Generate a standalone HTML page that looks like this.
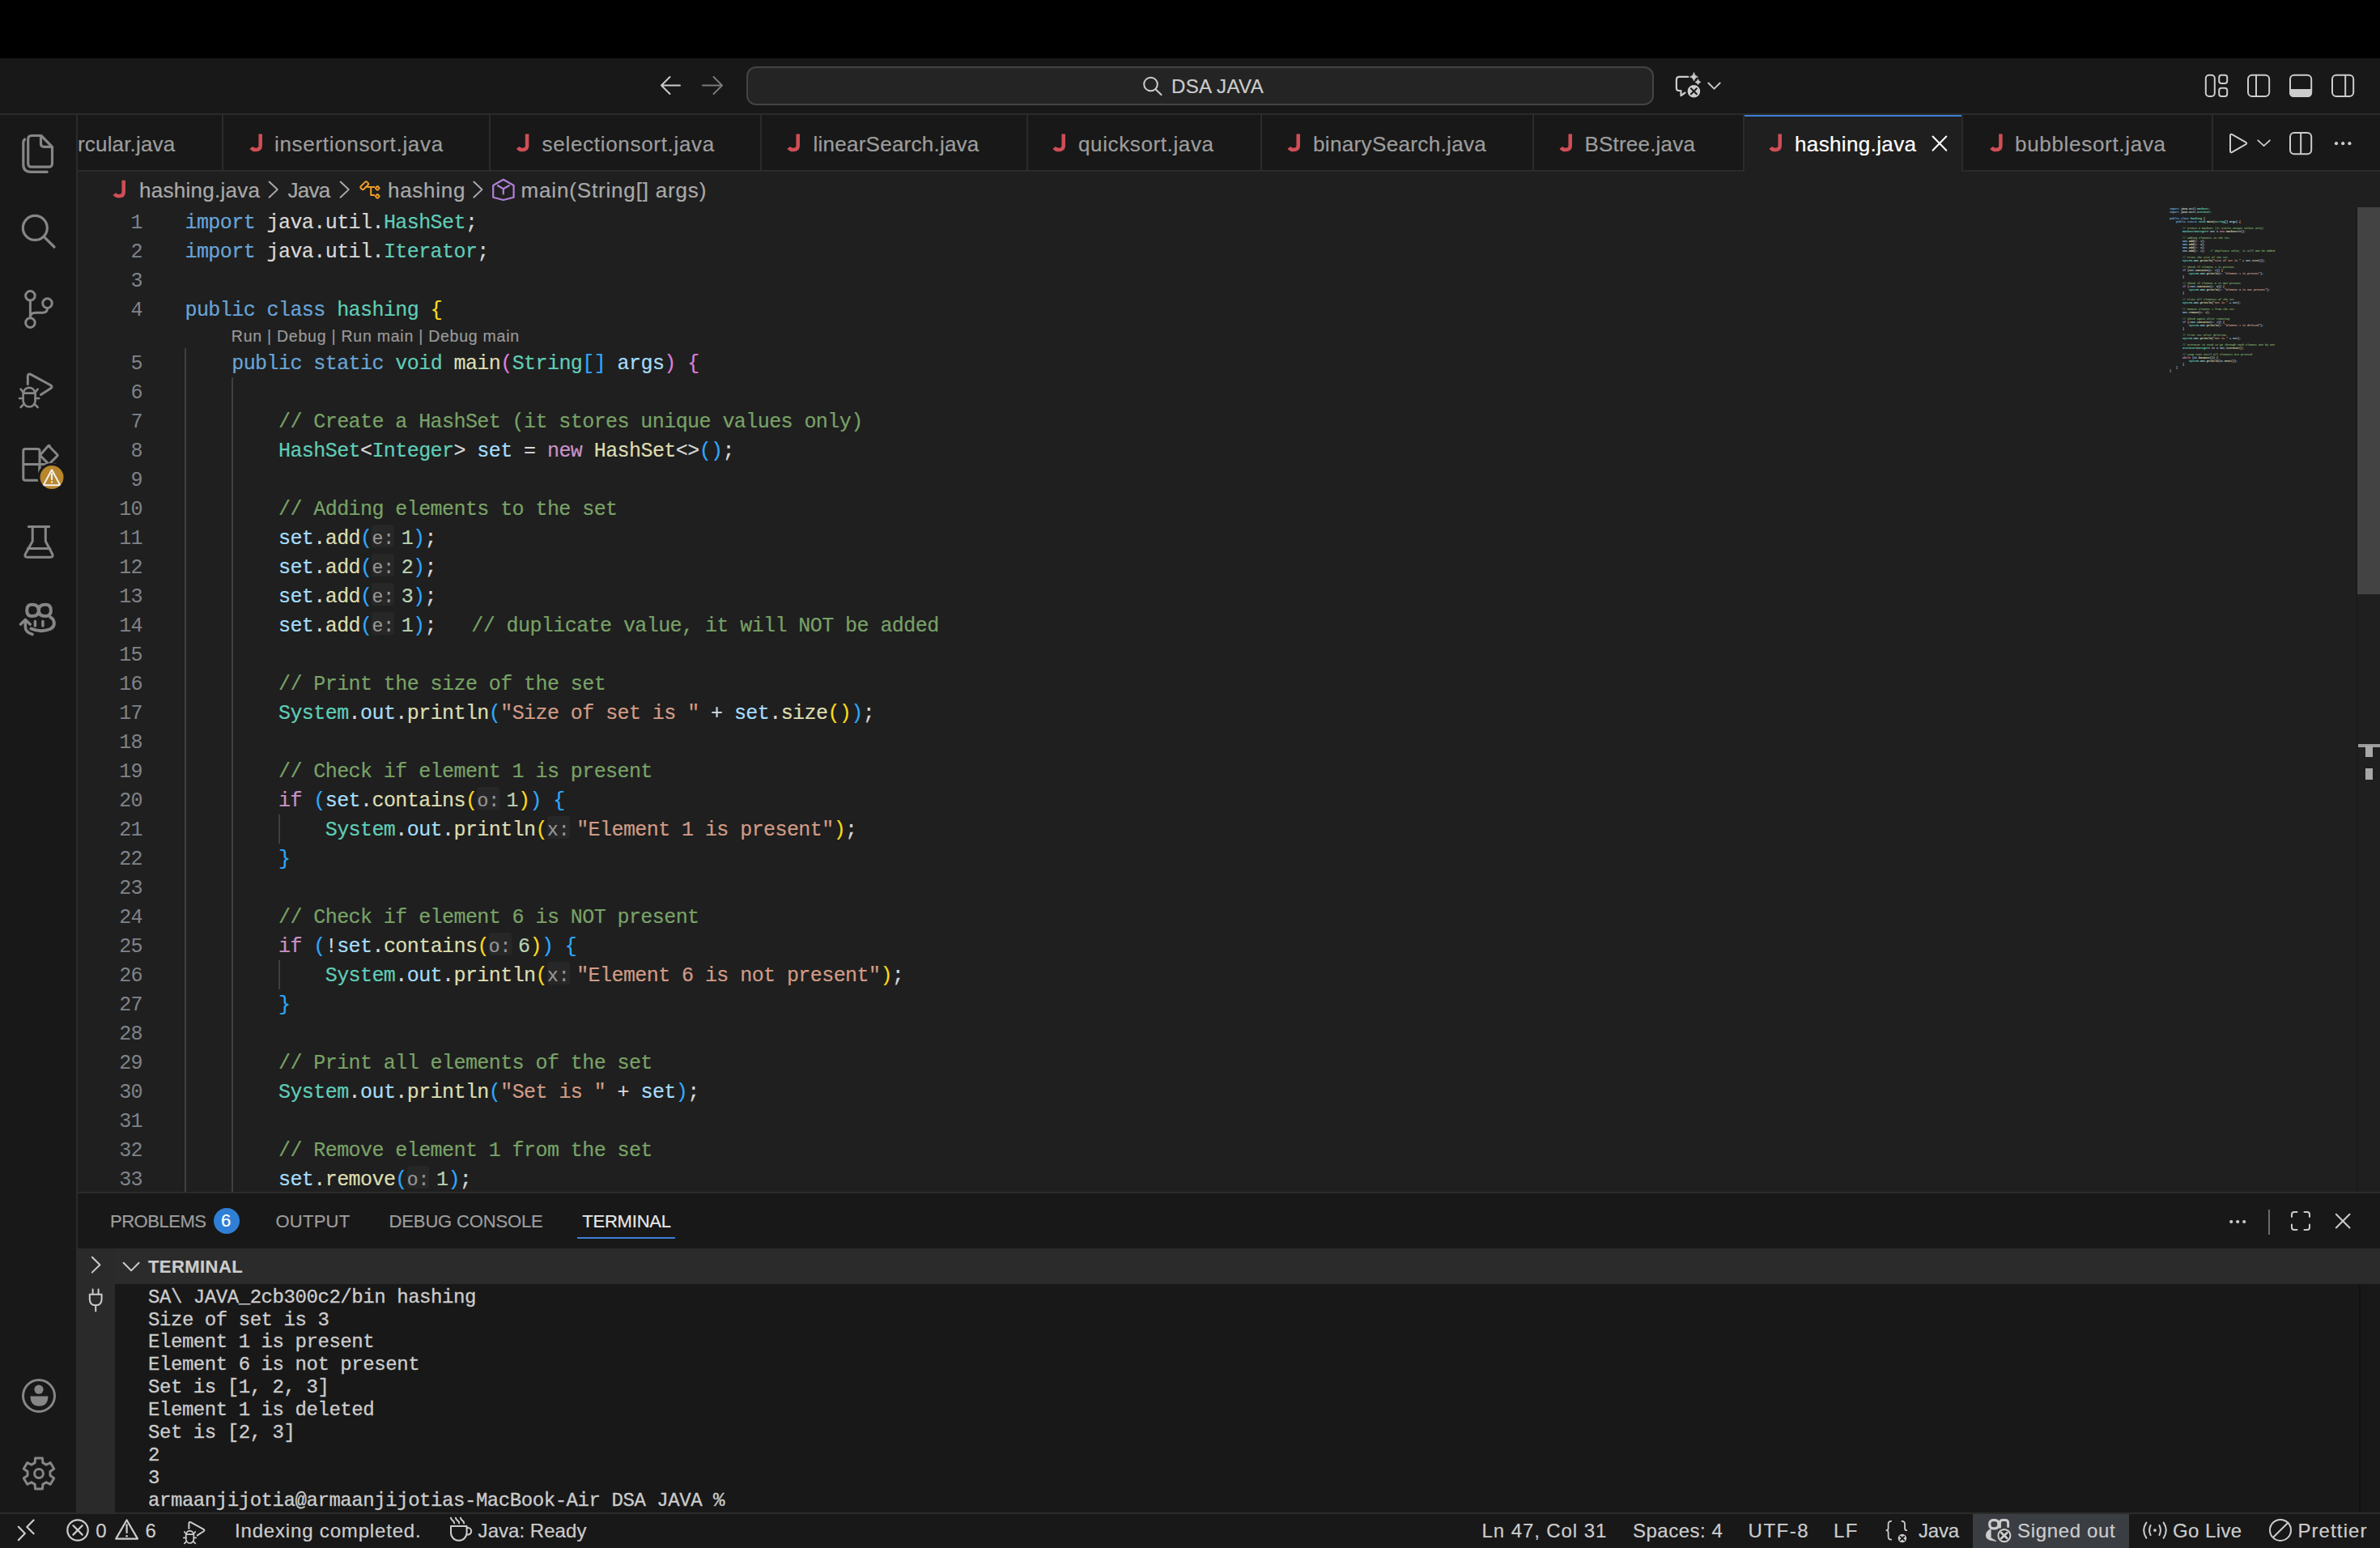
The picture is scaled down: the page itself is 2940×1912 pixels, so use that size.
<!DOCTYPE html>
<html><head><meta charset="utf-8"><title>hashing.java - DSA JAVA</title>
<style>
html,body{margin:0;padding:0;background:#000;overflow:hidden}
#root{position:relative;width:2940px;height:1912px;overflow:hidden;background:#181818;font-family:'Liberation Sans',sans-serif}
.ln{position:absolute;left:96px;width:80px;text-align:right;font-family:'Liberation Mono',monospace;color:#7f8389;white-space:pre}
.cl{position:absolute;font-family:'Liberation Mono',monospace;color:#d8d8d8;white-space:pre;-webkit-text-stroke:0.2px}
.kw{color:#68a5d8}.ty{color:#60cdb7}.fn{color:#ddddb1}.va{color:#a5ddfb}.cm{color:#79a267}.st{color:#d19b85}.nu{color:#bbd1b0}.ct{color:#c992c5}.b1{color:#fcd91c}.b2{color:#dc7ed8}.b3{color:#30a8fc}
.hi{display:inline-block;vertical-align:top;height:28.7px;width:27.7px;margin-right:8.5px;font-size:23px;letter-spacing:0;color:#969696;background:#272727;border-radius:3px}
.mm{position:absolute;left:2680px;font-family:'Liberation Mono',monospace;font-size:3.33px;line-height:4px;white-space:pre;color:#bbb}
</style></head><body><div id="root">
<div style="position:absolute;left:0px;top:0px;width:2940px;height:72px;background:#000;"></div><div style="position:absolute;left:0px;top:72px;width:2940px;height:68px;background:#181818;"></div><div style="position:absolute;left:0px;top:140px;width:2940px;height:2px;background:#2b2b2b;"></div><div style="position:absolute;left:922px;top:82px;width:1121px;height:48px;background:#242424;box-sizing:border-box;border:2px solid #444444;border-radius:12px"></div><div style="position:absolute;left:0px;top:142px;width:94px;height:1726px;background:#181818;"></div><div style="position:absolute;left:94px;top:142px;width:2px;height:1726px;background:#2b2b2b;"></div><div style="position:absolute;left:96px;top:142px;width:2844px;height:70px;background:#181818;"></div><div style="position:absolute;left:96px;top:210px;width:2844px;height:2px;background:#2b2b2b;"></div><div style="position:absolute;left:274px;top:142px;width:2px;height:70px;background:#2b2b2b;"></div><div style="position:absolute;left:604px;top:142px;width:2px;height:70px;background:#2b2b2b;"></div><div style="position:absolute;left:939px;top:142px;width:2px;height:70px;background:#2b2b2b;"></div><div style="position:absolute;left:1268px;top:142px;width:2px;height:70px;background:#2b2b2b;"></div><div style="position:absolute;left:1557px;top:142px;width:2px;height:70px;background:#2b2b2b;"></div><div style="position:absolute;left:1893px;top:142px;width:2px;height:70px;background:#2b2b2b;"></div><div style="position:absolute;left:2732px;top:142px;width:2px;height:70px;background:#2b2b2b;"></div><div style="position:absolute;left:2153px;top:142px;width:272px;height:70px;background:#1f1f1f;"></div><div style="position:absolute;left:2153px;top:142px;width:2px;height:70px;background:#2b2b2b;"></div><div style="position:absolute;left:2423px;top:142px;width:2px;height:70px;background:#2b2b2b;"></div><div style="position:absolute;left:2155px;top:142px;width:268px;height:2px;background:#3b7fd6;"></div><div style="position:absolute;left:96px;top:212px;width:2844px;height:1260px;background:#1f1f1f;"></div><div style="position:absolute;left:2911px;top:256px;width:1px;height:1216px;background:#171717;"></div><div style="position:absolute;left:2912px;top:256px;width:28px;height:478px;background:#434343;"></div><div style="position:absolute;left:2913px;top:919px;width:27px;height:4px;background:#9a9a9a;"></div><div style="position:absolute;left:2922px;top:921px;width:9px;height:14px;background:#a8a8a8;"></div><div style="position:absolute;left:2922px;top:949px;width:9px;height:14px;background:#a8a8a8;"></div><div style="position:absolute;left:96px;top:1472px;width:2844px;height:2px;background:#2b2b2b;"></div><div style="position:absolute;left:96px;top:1474px;width:2844px;height:394px;background:#181818;"></div><div style="position:absolute;left:713px;top:1528px;width:121px;height:2px;background:#3b7fd6;"></div><div style="position:absolute;left:264px;top:1492px;width:32px;height:32px;background:#2f7fd6;border-radius:16px"></div><div style="position:absolute;left:96px;top:1542px;width:46px;height:326px;background:#2a2a2a;"></div><div style="position:absolute;left:142px;top:1542px;width:2798px;height:44px;background:#2b2b2b;"></div><div style="position:absolute;left:2914px;top:1588px;width:2px;height:280px;background:#101010;"></div><div style="position:absolute;left:183px;top:1588.60px;font-family:'Liberation Mono';font-size:24px;line-height:28px;letter-spacing:-0.44px;-webkit-text-stroke:0.3px #cccccc;color:#cccccc;white-space:pre">SA\ JAVA_2cb300c2/bin hashing</div><div style="position:absolute;left:183px;top:1616.52px;font-family:'Liberation Mono';font-size:24px;line-height:28px;letter-spacing:-0.44px;-webkit-text-stroke:0.3px #cccccc;color:#cccccc;white-space:pre">Size of set is 3</div><div style="position:absolute;left:183px;top:1644.44px;font-family:'Liberation Mono';font-size:24px;line-height:28px;letter-spacing:-0.44px;-webkit-text-stroke:0.3px #cccccc;color:#cccccc;white-space:pre">Element 1 is present</div><div style="position:absolute;left:183px;top:1672.36px;font-family:'Liberation Mono';font-size:24px;line-height:28px;letter-spacing:-0.44px;-webkit-text-stroke:0.3px #cccccc;color:#cccccc;white-space:pre">Element 6 is not present</div><div style="position:absolute;left:183px;top:1700.28px;font-family:'Liberation Mono';font-size:24px;line-height:28px;letter-spacing:-0.44px;-webkit-text-stroke:0.3px #cccccc;color:#cccccc;white-space:pre">Set is [1, 2, 3]</div><div style="position:absolute;left:183px;top:1728.20px;font-family:'Liberation Mono';font-size:24px;line-height:28px;letter-spacing:-0.44px;-webkit-text-stroke:0.3px #cccccc;color:#cccccc;white-space:pre">Element 1 is deleted</div><div style="position:absolute;left:183px;top:1756.12px;font-family:'Liberation Mono';font-size:24px;line-height:28px;letter-spacing:-0.44px;-webkit-text-stroke:0.3px #cccccc;color:#cccccc;white-space:pre">Set is [2, 3]</div><div style="position:absolute;left:183px;top:1784.04px;font-family:'Liberation Mono';font-size:24px;line-height:28px;letter-spacing:-0.44px;-webkit-text-stroke:0.3px #cccccc;color:#cccccc;white-space:pre">2</div><div style="position:absolute;left:183px;top:1811.96px;font-family:'Liberation Mono';font-size:24px;line-height:28px;letter-spacing:-0.44px;-webkit-text-stroke:0.3px #cccccc;color:#cccccc;white-space:pre">3</div><div style="position:absolute;left:183px;top:1839.88px;font-family:'Liberation Mono';font-size:24px;line-height:28px;letter-spacing:-0.44px;-webkit-text-stroke:0.3px #cccccc;color:#cccccc;white-space:pre">armaanjijotia@armaanjijotias-MacBook-Air DSA JAVA %</div><div style="position:absolute;left:0px;top:1868px;width:2940px;height:2px;background:#2b2b2b;"></div><div style="position:absolute;left:0px;top:1870px;width:2940px;height:42px;background:#181818;"></div><div style="position:absolute;left:2437px;top:1870px;width:193px;height:42px;background:#3a3d41;"></div><div style="position:absolute;left:228px;top:430px;width:2px;height:1042px;background:#404040;"></div><div style="position:absolute;left:286px;top:466px;width:2px;height:1006px;background:#404040;"></div><div style="position:absolute;left:344px;top:1006px;width:2px;height:36px;background:#404040;"></div><div style="position:absolute;left:344px;top:1186px;width:2px;height:36px;background:#404040;"></div><div class="ln" style="top:257.5px;font-size:25px;line-height:36px;letter-spacing:-0.57px">1</div><div class="cl" style="left:228.5px;top:257.5px;font-size:25px;line-height:36px;letter-spacing:-0.57px"><span class="kw">import</span> java.util.<span class="ty">HashSet</span>;</div><div class="ln" style="top:293.5px;font-size:25px;line-height:36px;letter-spacing:-0.57px">2</div><div class="cl" style="left:228.5px;top:293.5px;font-size:25px;line-height:36px;letter-spacing:-0.57px"><span class="kw">import</span> java.util.<span class="ty">Iterator</span>;</div><div class="ln" style="top:329.5px;font-size:25px;line-height:36px;letter-spacing:-0.57px">3</div><div class="ln" style="top:365.5px;font-size:25px;line-height:36px;letter-spacing:-0.57px">4</div><div class="cl" style="left:228.5px;top:365.5px;font-size:25px;line-height:36px;letter-spacing:-0.57px"><span class="kw">public</span> <span class="kw">class</span> <span class="ty">hashing</span> <span class="b1">{</span></div><div class="ln" style="top:431.5px;font-size:25px;line-height:36px;letter-spacing:-0.57px">5</div><div class="cl" style="left:228.5px;top:431.5px;font-size:25px;line-height:36px;letter-spacing:-0.57px">    <span class="kw">public</span> <span class="kw">static</span> <span class="ty">void</span> <span class="fn">main</span><span class="b2">(</span><span class="ty">String</span><span class="b3">[]</span> <span class="va">args</span><span class="b2">)</span> <span class="b2">{</span></div><div class="ln" style="top:467.5px;font-size:25px;line-height:36px;letter-spacing:-0.57px">6</div><div class="ln" style="top:503.5px;font-size:25px;line-height:36px;letter-spacing:-0.57px">7</div><div class="cl" style="left:228.5px;top:503.5px;font-size:25px;line-height:36px;letter-spacing:-0.57px">        <span class="cm">// Create a HashSet (it stores unique values only)</span></div><div class="ln" style="top:539.5px;font-size:25px;line-height:36px;letter-spacing:-0.57px">8</div><div class="cl" style="left:228.5px;top:539.5px;font-size:25px;line-height:36px;letter-spacing:-0.57px">        <span class="ty">HashSet</span>&lt;<span class="ty">Integer</span>&gt; <span class="va">set</span> = <span class="ct">new</span> <span class="fn">HashSet</span>&lt;&gt;<span class="b3">()</span>;</div><div class="ln" style="top:575.5px;font-size:25px;line-height:36px;letter-spacing:-0.57px">9</div><div class="ln" style="top:611.5px;font-size:25px;line-height:36px;letter-spacing:-0.57px">10</div><div class="cl" style="left:228.5px;top:611.5px;font-size:25px;line-height:36px;letter-spacing:-0.57px">        <span class="cm">// Adding elements to the set</span></div><div class="ln" style="top:647.5px;font-size:25px;line-height:36px;letter-spacing:-0.57px">11</div><div class="cl" style="left:228.5px;top:647.5px;font-size:25px;line-height:36px;letter-spacing:-0.57px">        <span class="va">set</span>.<span class="fn">add</span><span class="b3">(</span><span class="hi">e:</span><span class="nu">1</span><span class="b3">)</span>;</div><div class="ln" style="top:683.5px;font-size:25px;line-height:36px;letter-spacing:-0.57px">12</div><div class="cl" style="left:228.5px;top:683.5px;font-size:25px;line-height:36px;letter-spacing:-0.57px">        <span class="va">set</span>.<span class="fn">add</span><span class="b3">(</span><span class="hi">e:</span><span class="nu">2</span><span class="b3">)</span>;</div><div class="ln" style="top:719.5px;font-size:25px;line-height:36px;letter-spacing:-0.57px">13</div><div class="cl" style="left:228.5px;top:719.5px;font-size:25px;line-height:36px;letter-spacing:-0.57px">        <span class="va">set</span>.<span class="fn">add</span><span class="b3">(</span><span class="hi">e:</span><span class="nu">3</span><span class="b3">)</span>;</div><div class="ln" style="top:755.5px;font-size:25px;line-height:36px;letter-spacing:-0.57px">14</div><div class="cl" style="left:228.5px;top:755.5px;font-size:25px;line-height:36px;letter-spacing:-0.57px">        <span class="va">set</span>.<span class="fn">add</span><span class="b3">(</span><span class="hi">e:</span><span class="nu">1</span><span class="b3">)</span>;   <span class="cm">// duplicate value, it will NOT be added</span></div><div class="ln" style="top:791.5px;font-size:25px;line-height:36px;letter-spacing:-0.57px">15</div><div class="ln" style="top:827.5px;font-size:25px;line-height:36px;letter-spacing:-0.57px">16</div><div class="cl" style="left:228.5px;top:827.5px;font-size:25px;line-height:36px;letter-spacing:-0.57px">        <span class="cm">// Print the size of the set</span></div><div class="ln" style="top:863.5px;font-size:25px;line-height:36px;letter-spacing:-0.57px">17</div><div class="cl" style="left:228.5px;top:863.5px;font-size:25px;line-height:36px;letter-spacing:-0.57px">        <span class="ty">System</span>.<span class="va">out</span>.<span class="fn">println</span><span class="b3">(</span><span class="st">&quot;Size of set is &quot;</span> + <span class="va">set</span>.<span class="fn">size</span><span class="b1">()</span><span class="b3">)</span>;</div><div class="ln" style="top:899.5px;font-size:25px;line-height:36px;letter-spacing:-0.57px">18</div><div class="ln" style="top:935.5px;font-size:25px;line-height:36px;letter-spacing:-0.57px">19</div><div class="cl" style="left:228.5px;top:935.5px;font-size:25px;line-height:36px;letter-spacing:-0.57px">        <span class="cm">// Check if element 1 is present</span></div><div class="ln" style="top:971.5px;font-size:25px;line-height:36px;letter-spacing:-0.57px">20</div><div class="cl" style="left:228.5px;top:971.5px;font-size:25px;line-height:36px;letter-spacing:-0.57px">        <span class="ct">if</span> <span class="b3">(</span><span class="va">set</span>.<span class="fn">contains</span><span class="b1">(</span><span class="hi">o:</span><span class="nu">1</span><span class="b1">)</span><span class="b3">)</span> <span class="b3">{</span></div><div class="ln" style="top:1007.5px;font-size:25px;line-height:36px;letter-spacing:-0.57px">21</div><div class="cl" style="left:228.5px;top:1007.5px;font-size:25px;line-height:36px;letter-spacing:-0.57px">            <span class="ty">System</span>.<span class="va">out</span>.<span class="fn">println</span><span class="b1">(</span><span class="hi">x:</span><span class="st">&quot;Element 1 is present&quot;</span><span class="b1">)</span>;</div><div class="ln" style="top:1043.5px;font-size:25px;line-height:36px;letter-spacing:-0.57px">22</div><div class="cl" style="left:228.5px;top:1043.5px;font-size:25px;line-height:36px;letter-spacing:-0.57px">        <span class="b3">}</span></div><div class="ln" style="top:1079.5px;font-size:25px;line-height:36px;letter-spacing:-0.57px">23</div><div class="ln" style="top:1115.5px;font-size:25px;line-height:36px;letter-spacing:-0.57px">24</div><div class="cl" style="left:228.5px;top:1115.5px;font-size:25px;line-height:36px;letter-spacing:-0.57px">        <span class="cm">// Check if element 6 is NOT present</span></div><div class="ln" style="top:1151.5px;font-size:25px;line-height:36px;letter-spacing:-0.57px">25</div><div class="cl" style="left:228.5px;top:1151.5px;font-size:25px;line-height:36px;letter-spacing:-0.57px">        <span class="ct">if</span> <span class="b3">(</span>!<span class="va">set</span>.<span class="fn">contains</span><span class="b1">(</span><span class="hi">o:</span><span class="nu">6</span><span class="b1">)</span><span class="b3">)</span> <span class="b3">{</span></div><div class="ln" style="top:1187.5px;font-size:25px;line-height:36px;letter-spacing:-0.57px">26</div><div class="cl" style="left:228.5px;top:1187.5px;font-size:25px;line-height:36px;letter-spacing:-0.57px">            <span class="ty">System</span>.<span class="va">out</span>.<span class="fn">println</span><span class="b1">(</span><span class="hi">x:</span><span class="st">&quot;Element 6 is not present&quot;</span><span class="b1">)</span>;</div><div class="ln" style="top:1223.5px;font-size:25px;line-height:36px;letter-spacing:-0.57px">27</div><div class="cl" style="left:228.5px;top:1223.5px;font-size:25px;line-height:36px;letter-spacing:-0.57px">        <span class="b3">}</span></div><div class="ln" style="top:1259.5px;font-size:25px;line-height:36px;letter-spacing:-0.57px">28</div><div class="ln" style="top:1295.5px;font-size:25px;line-height:36px;letter-spacing:-0.57px">29</div><div class="cl" style="left:228.5px;top:1295.5px;font-size:25px;line-height:36px;letter-spacing:-0.57px">        <span class="cm">// Print all elements of the set</span></div><div class="ln" style="top:1331.5px;font-size:25px;line-height:36px;letter-spacing:-0.57px">30</div><div class="cl" style="left:228.5px;top:1331.5px;font-size:25px;line-height:36px;letter-spacing:-0.57px">        <span class="ty">System</span>.<span class="va">out</span>.<span class="fn">println</span><span class="b3">(</span><span class="st">&quot;Set is &quot;</span> + <span class="va">set</span><span class="b3">)</span>;</div><div class="ln" style="top:1367.5px;font-size:25px;line-height:36px;letter-spacing:-0.57px">31</div><div class="ln" style="top:1403.5px;font-size:25px;line-height:36px;letter-spacing:-0.57px">32</div><div class="cl" style="left:228.5px;top:1403.5px;font-size:25px;line-height:36px;letter-spacing:-0.57px">        <span class="cm">// Remove element 1 from the set</span></div><div class="ln" style="top:1439.5px;font-size:25px;line-height:36px;letter-spacing:-0.57px">33</div><div class="cl" style="left:228.5px;top:1439.5px;font-size:25px;line-height:36px;letter-spacing:-0.57px">        <span class="va">set</span>.<span class="fn">remove</span><span class="b3">(</span><span class="hi">o:</span><span class="nu">1</span><span class="b3">)</span>;</div><div style="position:absolute;left:2680px;top:256px;transform-origin:0 0;transform:scale(0.13860,0.11111);font-family:'Liberation Mono';font-size:25px;line-height:36px;letter-spacing:-0.57px;font-weight:700;color:#d4d4d4;white-space:pre;opacity:1"><div style="height:36px"><span class="kw">import</span> java.util.<span class="ty">HashSet</span>;</div><div style="height:36px"><span class="kw">import</span> java.util.<span class="ty">Iterator</span>;</div><div style="height:36px">&nbsp;</div><div style="height:36px"><span class="kw">public</span> <span class="kw">class</span> <span class="ty">hashing</span> {</div><div style="height:36px">    <span class="kw">public</span> <span class="kw">static</span> <span class="ty">void</span> <span class="fn">main</span>(<span class="ty">String</span>[] <span class="va">args</span>) {</div><div style="height:36px">&nbsp;</div><div style="height:36px">        <span class="cm">// Create a HashSet (it stores unique values only)</span></div><div style="height:36px">        <span class="ty">HashSet</span>&lt;<span class="ty">Integer</span>&gt; <span class="va">set</span> = <span class="ct">new</span> <span class="fn">HashSet</span>&lt;&gt;();</div><div style="height:36px">&nbsp;</div><div style="height:36px">        <span class="cm">// Adding elements to the set</span></div><div style="height:36px">        <span class="va">set</span>.<span class="fn">add</span>(<span style="color:#8a8a8a">e: </span><span class="nu">1</span>);</div><div style="height:36px">        <span class="va">set</span>.<span class="fn">add</span>(<span style="color:#8a8a8a">e: </span><span class="nu">2</span>);</div><div style="height:36px">        <span class="va">set</span>.<span class="fn">add</span>(<span style="color:#8a8a8a">e: </span><span class="nu">3</span>);</div><div style="height:36px">        <span class="va">set</span>.<span class="fn">add</span>(<span style="color:#8a8a8a">e: </span><span class="nu">1</span>);   <span class="cm">// duplicate value, it will NOT be added</span></div><div style="height:36px">&nbsp;</div><div style="height:36px">        <span class="cm">// Print the size of the set</span></div><div style="height:36px">        <span class="ty">System</span>.<span class="va">out</span>.<span class="fn">println</span>(<span class="st">&quot;Size of set is &quot;</span> + <span class="va">set</span>.<span class="fn">size</span>());</div><div style="height:36px">&nbsp;</div><div style="height:36px">        <span class="cm">// Check if element 1 is present</span></div><div style="height:36px">        <span class="ct">if</span> (<span class="va">set</span>.<span class="fn">contains</span>(<span style="color:#8a8a8a">o: </span><span class="nu">1</span>)) {</div><div style="height:36px">            <span class="ty">System</span>.<span class="va">out</span>.<span class="fn">println</span>(<span style="color:#8a8a8a">x: </span><span class="st">&quot;Element 1 is present&quot;</span>);</div><div style="height:36px">        }</div><div style="height:36px">&nbsp;</div><div style="height:36px">        <span class="cm">// Check if element 6 is NOT present</span></div><div style="height:36px">        <span class="ct">if</span> (!<span class="va">set</span>.<span class="fn">contains</span>(<span style="color:#8a8a8a">o: </span><span class="nu">6</span>)) {</div><div style="height:36px">            <span class="ty">System</span>.<span class="va">out</span>.<span class="fn">println</span>(<span style="color:#8a8a8a">x: </span><span class="st">&quot;Element 6 is not present&quot;</span>);</div><div style="height:36px">        }</div><div style="height:36px">&nbsp;</div><div style="height:36px">        <span class="cm">// Print all elements of the set</span></div><div style="height:36px">        <span class="ty">System</span>.<span class="va">out</span>.<span class="fn">println</span>(<span class="st">&quot;Set is &quot;</span> + <span class="va">set</span>);</div><div style="height:36px">&nbsp;</div><div style="height:36px">        <span class="cm">// Remove element 1 from the set</span></div><div style="height:36px">        <span class="va">set</span>.<span class="fn">remove</span>(<span style="color:#8a8a8a">o: </span><span class="nu">1</span>);</div><div style="height:36px">&nbsp;</div><div style="height:36px">        <span class="cm">// Check again after removing</span></div><div style="height:36px">        <span class="ct">if</span> (!<span class="va">set</span>.<span class="fn">contains</span>(<span style="color:#8a8a8a">o: </span><span class="nu">1</span>)) {</div><div style="height:36px">            <span class="ty">System</span>.<span class="va">out</span>.<span class="fn">println</span>(<span style="color:#8a8a8a">x: </span><span class="st">&quot;Element 1 is deleted&quot;</span>);</div><div style="height:36px">        }</div><div style="height:36px">&nbsp;</div><div style="height:36px">        <span class="cm">// Print set after deletion</span></div><div style="height:36px">        <span class="ty">System</span>.<span class="va">out</span>.<span class="fn">println</span>(<span class="st">&quot;Set is &quot;</span> + <span class="va">set</span>);</div><div style="height:36px">&nbsp;</div><div style="height:36px">        <span class="cm">// Iterator is used to go through each element one by one</span></div><div style="height:36px">        <span class="ty">Iterator</span>&lt;<span class="ty">Integer</span>&gt; <span class="va">it</span> = <span class="va">set</span>.<span class="fn">iterator</span>();</div><div style="height:36px">&nbsp;</div><div style="height:36px">        <span class="cm">// Loop runs until all elements are printed</span></div><div style="height:36px">        <span class="ct">while</span> (<span class="va">it</span>.<span class="fn">hasNext</span>()) {</div><div style="height:36px">            <span class="ty">System</span>.<span class="va">out</span>.<span class="fn">println</span>(<span class="va">it</span>.<span class="fn">next</span>());</div><div style="height:36px">        }</div><div style="height:36px">    }</div><div style="height:36px">}</div></div><div style="position:absolute;left:1447.00px;top:88.00px;font-family:'Liberation Sans';font-size:24px;font-weight:400;line-height:38px;color:#cccccc;letter-spacing:0.357px;white-space:pre;-webkit-text-stroke:0.2px #cccccc">DSA JAVA</div><div style="position:absolute;left:96px;top:157.80px;width:178px;height:41px;overflow:hidden"><div style="position:absolute;left:96.00px;top:157.80px;font-family:'Liberation Sans';font-size:26px;font-weight:400;line-height:41px;color:#9d9d9d;letter-spacing:0.170px;white-space:pre;-webkit-text-stroke:0.2px #9d9d9d;left:0.00px;top:0px">rcular.java</div></div><div style="position:absolute;left:339.00px;top:157.80px;font-family:'Liberation Sans';font-size:26px;font-weight:400;line-height:41px;color:#9d9d9d;letter-spacing:0.682px;white-space:pre;-webkit-text-stroke:0.2px #9d9d9d">insertionsort.java</div><div style="position:absolute;left:669.60px;top:157.80px;font-family:'Liberation Sans';font-size:26px;font-weight:400;line-height:41px;color:#9d9d9d;letter-spacing:0.694px;white-space:pre;-webkit-text-stroke:0.2px #9d9d9d">selectionsort.java</div><div style="position:absolute;left:1004.60px;top:157.80px;font-family:'Liberation Sans';font-size:26px;font-weight:400;line-height:41px;color:#9d9d9d;letter-spacing:0.238px;white-space:pre;-webkit-text-stroke:0.2px #9d9d9d">linearSearch.java</div><div style="position:absolute;left:1332.00px;top:157.80px;font-family:'Liberation Sans';font-size:26px;font-weight:400;line-height:41px;color:#9d9d9d;letter-spacing:0.615px;white-space:pre;-webkit-text-stroke:0.2px #9d9d9d">quicksort.java</div><div style="position:absolute;left:1622.00px;top:157.80px;font-family:'Liberation Sans';font-size:26px;font-weight:400;line-height:41px;color:#9d9d9d;letter-spacing:0.356px;white-space:pre;-webkit-text-stroke:0.2px #9d9d9d">binarySearch.java</div><div style="position:absolute;left:1957.50px;top:157.80px;font-family:'Liberation Sans';font-size:26px;font-weight:400;line-height:41px;color:#9d9d9d;letter-spacing:0.200px;white-space:pre;-webkit-text-stroke:0.2px #9d9d9d">BStree.java</div><div style="position:absolute;left:2217.00px;top:157.80px;font-family:'Liberation Sans';font-size:26px;font-weight:400;line-height:41px;color:#ffffff;letter-spacing:0.364px;white-space:pre;-webkit-text-stroke:0.2px #ffffff">hashing.java</div><div style="position:absolute;left:2489.00px;top:157.80px;font-family:'Liberation Sans';font-size:26px;font-weight:400;line-height:41px;color:#9d9d9d;letter-spacing:0.693px;white-space:pre;-webkit-text-stroke:0.2px #9d9d9d">bubblesort.java</div><div style="position:absolute;left:172.00px;top:215.30px;font-family:'Liberation Sans';font-size:26px;font-weight:400;line-height:41px;color:#a9a9a9;letter-spacing:0.264px;white-space:pre;-webkit-text-stroke:0.2px #a9a9a9">hashing.java</div><div style="position:absolute;left:355.50px;top:215.30px;font-family:'Liberation Sans';font-size:26px;font-weight:400;line-height:41px;color:#a9a9a9;letter-spacing:-0.733px;white-space:pre;-webkit-text-stroke:0.2px #a9a9a9">Java</div><div style="position:absolute;left:479.00px;top:215.30px;font-family:'Liberation Sans';font-size:26px;font-weight:400;line-height:41px;color:#a9a9a9;letter-spacing:0.717px;white-space:pre;-webkit-text-stroke:0.2px #a9a9a9">hashing</div><div style="position:absolute;left:643.60px;top:215.30px;font-family:'Liberation Sans';font-size:26px;font-weight:400;line-height:41px;color:#a9a9a9;letter-spacing:0.828px;white-space:pre;-webkit-text-stroke:0.2px #a9a9a9">main(String[] args)</div><div style="position:absolute;left:285.80px;top:399.90px;font-family:'Liberation Sans';font-size:19.5px;font-weight:400;line-height:31px;color:#999999;letter-spacing:0.759px;white-space:pre;-webkit-text-stroke:0.2px #999999">Run | Debug | Run main | Debug main</div><div style="position:absolute;left:136.00px;top:1491.00px;font-family:'Liberation Sans';font-size:22px;font-weight:400;line-height:35px;color:#9d9d9d;letter-spacing:-0.471px;white-space:pre;-webkit-text-stroke:0.2px #9d9d9d">PROBLEMS</div><div style="position:absolute;left:340.40px;top:1491.00px;font-family:'Liberation Sans';font-size:22px;font-weight:400;line-height:35px;color:#9d9d9d;letter-spacing:0.280px;white-space:pre;-webkit-text-stroke:0.2px #9d9d9d">OUTPUT</div><div style="position:absolute;left:480.60px;top:1491.00px;font-family:'Liberation Sans';font-size:22px;font-weight:400;line-height:35px;color:#9d9d9d;letter-spacing:-0.150px;white-space:pre;-webkit-text-stroke:0.2px #9d9d9d">DEBUG CONSOLE</div><div style="position:absolute;left:719.20px;top:1491.00px;font-family:'Liberation Sans';font-size:22px;font-weight:400;line-height:35px;color:#e7e7e7;letter-spacing:-0.200px;white-space:pre;-webkit-text-stroke:0.2px #e7e7e7">TERMINAL</div><div style="position:absolute;left:273.00px;top:1490.00px;font-family:'Liberation Sans';font-size:22px;font-weight:400;line-height:35px;color:#ffffff;letter-spacing:0.000px;white-space:pre;-webkit-text-stroke:0.2px #ffffff">6</div><div style="position:absolute;left:183.00px;top:1547.00px;font-family:'Liberation Sans';font-size:22px;font-weight:700;line-height:35px;color:#cccccc;letter-spacing:0.429px;white-space:pre;-webkit-text-stroke:0.2px #cccccc">TERMINAL</div><div style="position:absolute;left:118.30px;top:1871.90px;font-family:'Liberation Sans';font-size:24px;font-weight:400;line-height:38px;color:#cccccc;letter-spacing:0.000px;white-space:pre;-webkit-text-stroke:0.2px #cccccc">0</div><div style="position:absolute;left:179.50px;top:1871.90px;font-family:'Liberation Sans';font-size:24px;font-weight:400;line-height:38px;color:#cccccc;letter-spacing:0.000px;white-space:pre;-webkit-text-stroke:0.2px #cccccc">6</div><div style="position:absolute;left:290.00px;top:1871.90px;font-family:'Liberation Sans';font-size:24px;font-weight:400;line-height:38px;color:#cccccc;letter-spacing:0.828px;white-space:pre;-webkit-text-stroke:0.2px #cccccc">Indexing completed.</div><div style="position:absolute;left:590.60px;top:1871.90px;font-family:'Liberation Sans';font-size:24px;font-weight:400;line-height:38px;color:#cccccc;letter-spacing:0.040px;white-space:pre;-webkit-text-stroke:0.2px #cccccc">Java: Ready</div><div style="position:absolute;left:1830.60px;top:1871.90px;font-family:'Liberation Sans';font-size:24px;font-weight:400;line-height:38px;color:#cccccc;letter-spacing:0.908px;white-space:pre;-webkit-text-stroke:0.2px #cccccc">Ln 47, Col 31</div><div style="position:absolute;left:2017.00px;top:1871.90px;font-family:'Liberation Sans';font-size:24px;font-weight:400;line-height:38px;color:#cccccc;letter-spacing:0.500px;white-space:pre;-webkit-text-stroke:0.2px #cccccc">Spaces: 4</div><div style="position:absolute;left:2159.60px;top:1871.90px;font-family:'Liberation Sans';font-size:24px;font-weight:400;line-height:38px;color:#cccccc;letter-spacing:1.475px;white-space:pre;-webkit-text-stroke:0.2px #cccccc">UTF-8</div><div style="position:absolute;left:2265.00px;top:1871.90px;font-family:'Liberation Sans';font-size:24px;font-weight:400;line-height:38px;color:#cccccc;letter-spacing:1.400px;white-space:pre;-webkit-text-stroke:0.2px #cccccc">LF</div><div style="position:absolute;left:2370.00px;top:1871.90px;font-family:'Liberation Sans';font-size:24px;font-weight:400;line-height:38px;color:#cccccc;letter-spacing:-0.233px;white-space:pre;-webkit-text-stroke:0.2px #cccccc">Java</div><div style="position:absolute;left:2492.00px;top:1871.90px;font-family:'Liberation Sans';font-size:24px;font-weight:400;line-height:38px;color:#cccccc;letter-spacing:0.656px;white-space:pre;-webkit-text-stroke:0.2px #cccccc">Signed out</div><div style="position:absolute;left:2684.00px;top:1871.90px;font-family:'Liberation Sans';font-size:24px;font-weight:400;line-height:38px;color:#cccccc;letter-spacing:0.417px;white-space:pre;-webkit-text-stroke:0.2px #cccccc">Go Live</div><div style="position:absolute;left:2838.40px;top:1871.90px;font-family:'Liberation Sans';font-size:24px;font-weight:400;line-height:38px;color:#cccccc;letter-spacing:1.114px;white-space:pre;-webkit-text-stroke:0.2px #cccccc">Prettier</div>
<svg style="position:absolute;left:0;top:0" width="2940" height="1912" viewBox="0 0 2940 1912" fill="none">
<path d="M817,105.5 H840 M827.5,95 L817,105.5 L827.5,116" stroke="#cccccc" stroke-width="2" fill="none" stroke-linecap="round" stroke-linejoin="round" /><path d="M868,105.5 H892 M881.5,95 L892,105.5 L881.5,116" stroke="#7a7a7a" stroke-width="2" fill="none" stroke-linecap="round" stroke-linejoin="round" /><circle cx="1421.5" cy="104" r="8.3" stroke="#cccccc" stroke-width="2" fill="none"/><path d="M1427.5,110.2 L1434.5,117" stroke="#cccccc" stroke-width="2" fill="none" stroke-linecap="round" stroke-linejoin="round" /><path d="M2085.3,94.9 H2074.5 Q2070.9,94.9 2070.9,98.5 V108.4 Q2070.9,112 2074.5,112 H2076.5 V118.2 L2081.5,114.5" stroke="#cccccc" stroke-width="2.2" fill="none" stroke-linecap="round" stroke-linejoin="round" /><path d="M2092.5,89.9 Q2093.3,94.1 2097.4,94.9 Q2093.3,95.7 2092.5,99.9 Q2091.7,95.7 2087.6,94.9 Q2091.7,94.1 2092.5,89.9 Z" stroke="#cccccc" stroke-width="0.8" fill="#cccccc" stroke-linecap="round" stroke-linejoin="round" /><path d="M2097.5,98 Q2098,100.9 2100.9,101.4 Q2098,101.9 2097.5,104.8 Q2097,101.9 2094.1,101.4 Q2097,100.9 2097.5,98 Z" stroke="#cccccc" stroke-width="0.8" fill="#cccccc" stroke-linecap="round" stroke-linejoin="round" /><circle cx="2092.4" cy="112.8" r="8.8" stroke="#181818" stroke-width="2" fill="#cccccc"/><path d="M2088.9,109.3 L2095.9,116.3 M2095.9,109.3 L2088.9,116.3" stroke="#181818" stroke-width="2" fill="none" stroke-linecap="round" stroke-linejoin="round" /><path d="M2110.3,102.5 L2117.5,109.7 L2124.7,102.5" stroke="#cccccc" stroke-width="1.8" fill="none" stroke-linecap="round" stroke-linejoin="round" /><rect x="2724.8" y="92.7" width="11" height="26.3" rx="4" stroke="#cccccc" stroke-width="2" fill="none"/><rect x="2741.2" y="92.7" width="10" height="10.3" rx="3" stroke="#cccccc" stroke-width="2" fill="none"/><rect x="2741.2" y="108.7" width="10" height="10.3" rx="3" stroke="#cccccc" stroke-width="2" fill="none"/><rect x="2777" y="92.7" width="26.2" height="26.3" rx="5" stroke="#cccccc" stroke-width="2" fill="none"/><path d="M2787,93 V119" stroke="#cccccc" stroke-width="2" fill="none" stroke-linecap="round" stroke-linejoin="round" /><rect x="2829" y="92.7" width="26.2" height="26.3" rx="5" stroke="#cccccc" stroke-width="2" fill="none"/><path d="M2828,110 H2856 V114 Q2856,120 2850,120 H2834 Q2828,120 2828,114 Z" stroke="#cccccc" stroke-width="0" fill="#cccccc" stroke-linecap="round" stroke-linejoin="round" /><rect x="2881" y="92.7" width="26.2" height="26.3" rx="5" stroke="#cccccc" stroke-width="2" fill="none"/><path d="M2897.2,93 V119" stroke="#cccccc" stroke-width="2" fill="none" stroke-linecap="round" stroke-linejoin="round" /><path d="M50.5,167.5 H39 Q34.7,167.5 34.7,172 V201.7 Q34.7,206.2 39,206.2 H60 Q64.5,206.2 64.5,201.7 V181.3 L50.8,167.5 Z" stroke="#868686" stroke-width="3.2" fill="none" stroke-linecap="round" stroke-linejoin="round" /><path d="M50.5,168 V177.5 Q50.5,181.3 54.3,181.3 H64" stroke="#868686" stroke-width="3.2" fill="none" stroke-linecap="round" stroke-linejoin="round" /><path d="M31.6,171.4 Q28.8,172.8 28.8,176.5 V203 Q28.8,212.3 38.1,212.3 H59.4" stroke="#868686" stroke-width="3.2" fill="none" stroke-linejoin="round" stroke-linecap="butt"/><circle cx="43.3" cy="281.4" r="15" stroke="#868686" stroke-width="3.2" fill="none"/><path d="M54.5,292.6 L67,305" stroke="#868686" stroke-width="3.2" fill="none" stroke-linecap="round" stroke-linejoin="round" /><circle cx="37.4" cy="365.3" r="5.8" stroke="#868686" stroke-width="3" fill="none"/><circle cx="58.5" cy="374.6" r="5.8" stroke="#868686" stroke-width="3" fill="none"/><circle cx="37.4" cy="398.6" r="5.8" stroke="#868686" stroke-width="3" fill="none"/><path d="M37.4,371.1 V392.8" stroke="#868686" stroke-width="3" fill="none" stroke-linecap="round" stroke-linejoin="round" /><path d="M58.5,380.4 Q58.5,386.2 52.5,386.2 H44 Q37.4,386.2 37.4,392" stroke="#868686" stroke-width="3" fill="none" stroke-linecap="round" stroke-linejoin="round" /><g transform="translate(24,460) scale(1) translate(-24,-460)"><path d="M34.3,474.5 V465 Q34.3,460.6 38.3,462.6 L62.5,475.7 Q65.5,477.8 62.5,479.8 L50.5,487.5" stroke="#868686" stroke-width="3" fill="none" stroke-linecap="round" stroke-linejoin="round" /><path d="M29.4,484.3 A6.6,5.4 0 0 1 42.7,484.3" stroke="#868686" stroke-width="2.61" fill="none" stroke-linecap="round" stroke-linejoin="round" /><path d="M28.6,485.6 H43.6 V495 A7.5,7.5 0 0 1 28.6,495 Z" stroke="#868686" stroke-width="2.61" fill="none" stroke-linecap="round" stroke-linejoin="round" /><path d="M25.6,480.6 L29.6,485.6 M46.6,480.6 L42.6,485.6 M24,492 H28.6 M48.2,492 H43.6 M25.6,503 L30,498.6 M46.6,503 L42.2,498.6" stroke="#868686" stroke-width="2.61" fill="none" stroke-linecap="round" stroke-linejoin="round" /></g><path d="M49,573.6 H30.3 Q28.8,573.6 28.8,575.1 V590.8 Q28.8,593.3 31.3,593.3 H49 V573.6" stroke="#868686" stroke-width="3" fill="none" stroke-linecap="round" stroke-linejoin="round" /><path d="M31.3,554.4 H46.5 Q49,554.4 49,556.9 V593 M28.8,573.6 V556.9 Q28.8,554.4 31.3,554.4" stroke="#868686" stroke-width="3" fill="none" stroke-linecap="round" stroke-linejoin="round" /><path d="M49,573.6 H68 V591 Q68,593.3 65.7,593.3 H49" stroke="#868686" stroke-width="3" fill="none" stroke-linecap="round" stroke-linejoin="round" /><path d="M60.4,551 L70.5,561.2 Q71.6,562.3 70.5,563.4 L61.5,572.4 Q60.4,573.5 59.3,572.4 L50.3,563.4 Q49.2,562.3 50.3,561.2 L59.3,551 Q60.4,549.9 61.5,551 Z" stroke="#868686" stroke-width="3" fill="none" stroke-linecap="round" stroke-linejoin="round" /><circle cx="64" cy="589.6" r="16" stroke="#181818" stroke-width="3" fill="#b8862b"/><path d="M64,580.3 L73.6,598 Q74.2,599.2 72.9,599.2 H55.1 Q53.8,599.2 54.4,598 Z" stroke="#f2f2f2" stroke-width="2" fill="none" stroke-linecap="round" stroke-linejoin="round" /><path d="M64,585 V592" stroke="#f2f2f2" stroke-width="2.2" fill="none" stroke-linecap="round" stroke-linejoin="round" /><circle cx="64" cy="595.4" r="1.2" stroke="#f2f2f2" stroke-width="0" fill="#f2f2f2"/><path d="M35.3,650.4 H60.7 M40.2,651 V668.5 L31.5,684 Q29.5,688.2 34,688.2 H62 Q66.5,688.2 64.5,684 L56.3,668.5 V651 M34.2,677.5 H61.8" stroke="#868686" stroke-width="3" fill="none" stroke-linecap="round" stroke-linejoin="round" /><path d="M39.5,746.8 Q47.8,746.8 47.8,754 Q47.8,761 39.5,761 Q33.2,761 33.2,754 Q33.2,746.8 39.5,746.8 Z" stroke="#868686" stroke-width="4" fill="none" stroke-linecap="round" stroke-linejoin="round" /><path d="M56.2,746.8 Q62.9,746.8 62.9,754 Q62.9,761 56.2,761 Q47.8,761 47.8,754 Q47.8,746.8 56.2,746.8 Z" stroke="#868686" stroke-width="4" fill="none" stroke-linecap="round" stroke-linejoin="round" /><path d="M43.4,767.5 V773 M52.9,767.5 V773" stroke="#868686" stroke-width="3.5" fill="none" stroke-linecap="round" stroke-linejoin="round" /><path d="M38.5,776.5 Q50,781.5 62,777 Q67,774.5 66.8,769.5 Q66.5,764.5 62.5,762.5" stroke="#868686" stroke-width="4" fill="none" stroke-linecap="round" stroke-linejoin="round" /><path d="M25.5,771 L31.3,765.5 L37.2,771 M31.3,766.5 V774 Q31.3,781 40,783.5" stroke="#868686" stroke-width="3.6" fill="none" stroke-linecap="round" stroke-linejoin="round" /><circle cx="48" cy="1724" r="19.5" stroke="#868686" stroke-width="3" fill="none"/><circle cx="48" cy="1716.2" r="5.6" stroke="#868686" stroke-width="0" fill="#868686"/><path d="M37.5,1724.6 H59.4 Q59.4,1736.8 48.4,1736.8 Q37.5,1736.8 37.5,1724.6 Z" stroke="#868686" stroke-width="0" fill="#868686" stroke-linecap="round" stroke-linejoin="round" /><path d="M43.14,1806.66 L43.59,1800.90 L52.41,1800.90 L52.86,1806.66 L57.13,1809.12 L62.33,1806.63 L66.74,1814.27 L61.98,1817.53 L61.98,1822.47 L66.74,1825.73 L62.33,1833.37 L57.13,1830.88 L52.86,1833.34 L52.41,1839.10 L43.59,1839.10 L43.14,1833.34 L38.87,1830.88 L33.67,1833.37 L29.26,1825.73 L34.02,1822.47 L34.02,1817.53 L29.26,1814.27 L33.67,1806.63 L38.87,1809.12 Z" stroke="#868686" stroke-width="3" fill="none" stroke-linecap="round" stroke-linejoin="round" /><circle cx="48" cy="1820" r="5.4" stroke="#868686" stroke-width="3" fill="none"/><path d="M321.7,165.6 V180.1 Q321.7,185.1 316.0,185.1 Q312.2,185.1 310.3,182.4" stroke="#d04e56" stroke-width="4.5" fill="none" stroke-linejoin="round" stroke-linecap="butt"/><path d="M651.1,165.6 V180.1 Q651.1,185.1 645.4,185.1 Q641.6,185.1 639.7,182.4" stroke="#d04e56" stroke-width="4.5" fill="none" stroke-linejoin="round" stroke-linecap="butt"/><path d="M985.7,165.6 V180.1 Q985.7,185.1 980.0,185.1 Q976.2,185.1 974.3000000000001,182.4" stroke="#d04e56" stroke-width="4.5" fill="none" stroke-linejoin="round" stroke-linecap="butt"/><path d="M1313.7,165.6 V180.1 Q1313.7,185.1 1308.0,185.1 Q1304.2,185.1 1302.3,182.4" stroke="#d04e56" stroke-width="4.5" fill="none" stroke-linejoin="round" stroke-linecap="butt"/><path d="M1603.7,165.6 V180.1 Q1603.7,185.1 1598.0,185.1 Q1594.2,185.1 1592.3,182.4" stroke="#d04e56" stroke-width="4.5" fill="none" stroke-linejoin="round" stroke-linecap="butt"/><path d="M1939.7,165.6 V180.1 Q1939.7,185.1 1934.0,185.1 Q1930.2,185.1 1928.3,182.4" stroke="#d04e56" stroke-width="4.5" fill="none" stroke-linejoin="round" stroke-linecap="butt"/><path d="M2198.7,165.6 V180.1 Q2198.7,185.1 2193.0,185.1 Q2189.2,185.1 2187.2999999999997,182.4" stroke="#d04e56" stroke-width="4.5" fill="none" stroke-linejoin="round" stroke-linecap="butt"/><path d="M2471.3999999999996,165.6 V180.1 Q2471.3999999999996,185.1 2465.7,185.1 Q2461.8999999999996,185.1 2459.9999999999995,182.4" stroke="#d04e56" stroke-width="4.5" fill="none" stroke-linejoin="round" stroke-linecap="butt"/><path d="M152.7,222.7 V237.2 Q152.7,242.2 147.0,242.2 Q143.2,242.2 141.29999999999998,239.5" stroke="#d04e56" stroke-width="4.5" fill="none" stroke-linejoin="round" stroke-linecap="butt"/><path d="M2387.5,168.5 L2404.3,185.7 M2404.3,168.5 L2387.5,185.7" stroke="#ffffff" stroke-width="2" fill="none" stroke-linecap="round" stroke-linejoin="round" /><path d="M2755,167.5 Q2755,164.8 2757.4,166.1 L2774,175.6 Q2776.3,177 2774,178.4 L2757.4,187.9 Q2755,189.2 2755,186.5 Z" stroke="#cccccc" stroke-width="2" fill="none" stroke-linecap="round" stroke-linejoin="round" /><path d="M2789.3,173.3 L2796.6,180.2 L2803.9,173.3" stroke="#cccccc" stroke-width="1.8" fill="none" stroke-linecap="round" stroke-linejoin="round" /><rect x="2829" y="164" width="26.2" height="26.3" rx="5" stroke="#cccccc" stroke-width="2" fill="none"/><path d="M2842.2,164.5 V189.7" stroke="#cccccc" stroke-width="2" fill="none" stroke-linecap="round" stroke-linejoin="round" /><circle cx="2886" cy="177.2" r="2.1" stroke="#cccccc" stroke-width="0" fill="#cccccc"/><circle cx="2894.2" cy="177.2" r="2.1" stroke="#cccccc" stroke-width="0" fill="#cccccc"/><circle cx="2902.4" cy="177.2" r="2.1" stroke="#cccccc" stroke-width="0" fill="#cccccc"/><path d="M332.6,224.6 L342.70000000000005,234.1 L332.6,243.7" stroke="#a9a9a9" stroke-width="2" fill="none" stroke-linecap="round" stroke-linejoin="round" /><path d="M420.6,224.6 L430.70000000000005,234.1 L420.6,243.7" stroke="#a9a9a9" stroke-width="2" fill="none" stroke-linecap="round" stroke-linejoin="round" /><path d="M585.3,224.6 L595.4,234.1 L585.3,243.7" stroke="#a9a9a9" stroke-width="2" fill="none" stroke-linecap="round" stroke-linejoin="round" /><rect x="-5.4" y="-2.5" width="10.8" height="5" rx="1.8" stroke="#ee9d28" stroke-width="2" transform="translate(450.2,229.2) rotate(-45)"/><path d="M453.2,230.9 H463 M458.2,230.9 V241.1 H463" stroke="#ee9d28" stroke-width="2" fill="none" stroke-linejoin="round" stroke-linecap="butt"/><rect x="-1.9" y="-1.9" width="3.8" height="3.8" rx="1" stroke="#ee9d28" stroke-width="2" transform="translate(466.3,232.4) rotate(45)"/><rect x="-1.9" y="-1.9" width="3.8" height="3.8" rx="1" stroke="#ee9d28" stroke-width="2" transform="translate(466.3,242.4) rotate(45)"/><path d="M621.8,221.8 L634.6,229 V243.8 L621.8,247 L609.2,243.8 V229 Z" stroke="#b180d7" stroke-width="2.2" fill="none" stroke-linecap="round" stroke-linejoin="round" /><path d="M615,229.2 L621.8,233.2 L628.8,229.2 M621.8,233.2 V239.5" stroke="#b180d7" stroke-width="2.2" fill="none" stroke-linecap="round" stroke-linejoin="round" /><circle cx="2756.2" cy="1509" r="2.1" stroke="#cccccc" stroke-width="0" fill="#cccccc"/><circle cx="2764.2" cy="1509" r="2.1" stroke="#cccccc" stroke-width="0" fill="#cccccc"/><circle cx="2772.2" cy="1509" r="2.1" stroke="#cccccc" stroke-width="0" fill="#cccccc"/><path d="M2803,1494 V1525" stroke="#6b6b6b" stroke-width="2" fill="none" stroke-linejoin="round" stroke-linecap="butt"/><path d="M2831,1503 V1500 Q2831,1497 2834,1497 H2837.5 M2846.5,1497 H2850 Q2853,1497 2853,1500 V1503 M2853,1512.5 V1516 Q2853,1519 2850,1519 H2846.5 M2837.5,1519 H2834 Q2831,1519 2831,1516 V1512.5" stroke="#cccccc" stroke-width="2" fill="none" stroke-linecap="round" stroke-linejoin="round" /><path d="M2885.8,1499.7 L2902.5,1516.5 M2902.5,1499.7 L2885.8,1516.5" stroke="#cccccc" stroke-width="2" fill="none" stroke-linecap="round" stroke-linejoin="round" /><path d="M113.8,1552.8 L123.4,1562.2 L113.8,1571.6" stroke="#cccccc" stroke-width="2" fill="none" stroke-linecap="round" stroke-linejoin="round" /><path d="M152.6,1559.8 L162.1,1569.4 L171.6,1559.8" stroke="#cccccc" stroke-width="2" fill="none" stroke-linecap="round" stroke-linejoin="round" /><path d="M114.6,1592.5 V1598.5 M121.6,1592.5 V1598.5 M110.8,1598.8 H125.6 V1604.5 Q125.6,1612.2 118.2,1612.2 Q110.8,1612.2 110.8,1604.5 Z M118.2,1612.4 V1619.6" stroke="#cccccc" stroke-width="2" fill="none" stroke-linecap="round" stroke-linejoin="round" /><path d="M22.8,1885.8 L30.8,1893.9 L22.8,1902.3 M41.6,1877.6 L33.3,1886 L41.6,1894.3" stroke="#cccccc" stroke-width="2.2" fill="none" stroke-linecap="round" stroke-linejoin="round" /><circle cx="96" cy="1890" r="12.7" stroke="#cccccc" stroke-width="2.2" fill="none"/><path d="M90.4,1884.3 L101.7,1895.6 M101.7,1884.3 L90.4,1895.6" stroke="#cccccc" stroke-width="2.2" fill="none" stroke-linecap="round" stroke-linejoin="round" /><path d="M156.6,1877.5 L170,1900.6 H143.2 Z" stroke="#cccccc" stroke-width="2.2" fill="none" stroke-linecap="round" stroke-linejoin="round" /><path d="M156.6,1883 V1893" stroke="#cccccc" stroke-width="2.2" fill="none" stroke-linecap="round" stroke-linejoin="round" /><circle cx="156.6" cy="1897.3" r="1.3" stroke="#cccccc" stroke-width="0" fill="#cccccc"/><g transform="translate(226.8,1878.8) scale(0.64) translate(-24,-460)"><path d="M34.3,474.5 V465 Q34.3,460.6 38.3,462.6 L62.5,475.7 Q65.5,477.8 62.5,479.8 L50.5,487.5" stroke="#cccccc" stroke-width="3.1" fill="none" stroke-linecap="round" stroke-linejoin="round" /><path d="M29.4,484.3 A6.6,5.4 0 0 1 42.7,484.3" stroke="#cccccc" stroke-width="2.697" fill="none" stroke-linecap="round" stroke-linejoin="round" /><path d="M28.6,485.6 H43.6 V495 A7.5,7.5 0 0 1 28.6,495 Z" stroke="#cccccc" stroke-width="2.697" fill="none" stroke-linecap="round" stroke-linejoin="round" /><path d="M25.6,480.6 L29.6,485.6 M46.6,480.6 L42.6,485.6 M24,492 H28.6 M48.2,492 H43.6 M25.6,503 L30,498.6 M46.6,503 L42.2,498.6" stroke="#cccccc" stroke-width="2.697" fill="none" stroke-linecap="round" stroke-linejoin="round" /></g><path d="M557,1885 H576.6 V1893 A9.8,9.8 0 0 1 557,1893 Z" stroke="#cccccc" stroke-width="2" fill="none" stroke-linecap="round" stroke-linejoin="round" /><path d="M576.6,1887 H578 A4.2,4.2 0 0 1 578,1895.4 H576.4" stroke="#cccccc" stroke-width="2" fill="none" stroke-linecap="round" stroke-linejoin="round" /><path d="M556.9,1874.8 Q557.4,1877 559.1999999999999,1878.2 Q561.1999999999999,1879.5 561.1,1881.4" stroke="#cccccc" stroke-width="2" fill="none" stroke-linecap="round" stroke-linejoin="round" /><path d="M562.9,1874.8 Q563.4,1877 565.1999999999999,1878.2 Q567.1999999999999,1879.5 567.1,1881.4" stroke="#cccccc" stroke-width="2" fill="none" stroke-linecap="round" stroke-linejoin="round" /><path d="M568.9,1874.8 Q569.4,1877 571.1999999999999,1878.2 Q573.1999999999999,1879.5 573.1,1881.4" stroke="#cccccc" stroke-width="2" fill="none" stroke-linecap="round" stroke-linejoin="round" /><path d="M2336.2,1878.8 Q2332.6,1878.8 2332.6,1882.5 V1887.2 Q2332.6,1890.2 2330.4,1890.2 Q2332.6,1890.2 2332.6,1893.2 V1898 Q2332.6,1901.7 2336.2,1901.7" stroke="#cccccc" stroke-width="1.8" fill="none" stroke-linecap="round" stroke-linejoin="round" /><path d="M2349.4,1878.8 Q2353,1878.8 2353,1882.5 V1887.2 Q2353,1890.2 2355.2,1890.2" stroke="#cccccc" stroke-width="1.8" fill="none" stroke-linecap="round" stroke-linejoin="round" /><circle cx="2349.9" cy="1900" r="6" stroke="#181818" stroke-width="1.5" fill="#cccccc"/><path d="M2347.5,1897.6 L2352.3,1902.4 M2352.3,1897.6 L2347.5,1902.4" stroke="#181818" stroke-width="1.8" fill="none" stroke-linecap="round" stroke-linejoin="round" /><rect x="2457.8" y="1877.6" width="11" height="10.2" rx="4" stroke="#cccccc" stroke-width="3.2" fill="none"/><path d="M2470.4,1886.3 V1881.2 Q2470.4,1877.6 2474.2,1877.6 H2476.9 Q2480.6,1877.6 2480.6,1881.2 V1885.6" stroke="#cccccc" stroke-width="3" fill="none" stroke-linecap="round" stroke-linejoin="round" /><path d="M2457.5,1889.2 Q2453.2,1892 2453.3,1896.5 Q2453.6,1901.3 2459,1902.3 L2466,1903.6 L2459.2,1899.5 V1889.2 Z" stroke="#cccccc" stroke-width="0.8" fill="#cccccc" stroke-linecap="round" stroke-linejoin="round" /><circle cx="2475.9" cy="1896.6" r="9.6" stroke="#3a3d41" stroke-width="0" fill="#3a3d41"/><circle cx="2475.9" cy="1896.6" r="7.5" stroke="#cccccc" stroke-width="2.1" fill="#262729"/><path d="M2472.3,1893.3 L2479.3,1900.1 M2479.3,1893.3 L2472.3,1900.1" stroke="#cccccc" stroke-width="2.8" fill="none" stroke-linecap="round" stroke-linejoin="round" /><circle cx="2662" cy="1890.1" r="1.9" stroke="#cccccc" stroke-width="0" fill="#cccccc"/><path d="M2656.6,1884 Q2653.6,1890 2656.6,1896 M2667.4,1884 Q2670.4,1890 2667.4,1896" stroke="#cccccc" stroke-width="2" fill="none" stroke-linecap="round" stroke-linejoin="round" /><path d="M2651.4,1880.6 Q2645,1890 2651.4,1899.6 M2672.6,1880.6 Q2679,1890 2672.6,1899.6" stroke="#cccccc" stroke-width="2" fill="none" stroke-linecap="round" stroke-linejoin="round" /><circle cx="2817" cy="1889.9" r="13" stroke="#cccccc" stroke-width="2" fill="none"/><path d="M2808.4,1898.5 L2826.4,1880.8" stroke="#cccccc" stroke-width="2" fill="none" stroke-linecap="round" stroke-linejoin="round" />
</svg>
</div></body></html>
